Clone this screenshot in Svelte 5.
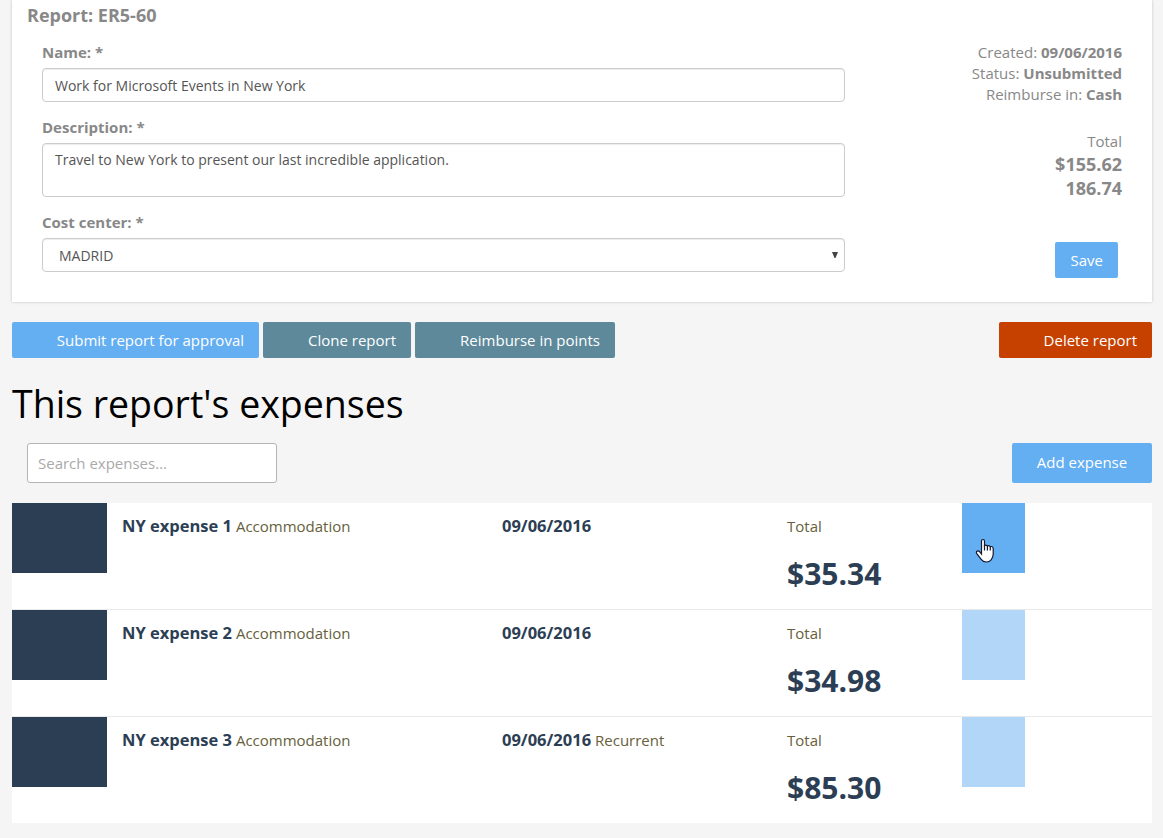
<script>
  const expenses = [
    { title: 'NY expense 1', category: 'Accommodation', date: '09/06/2016', note: '', total: '$35.34', active: true },
    { title: 'NY expense 2', category: 'Accommodation', date: '09/06/2016', note: '', total: '$34.98', active: false },
    { title: 'NY expense 3', category: 'Accommodation', date: '09/06/2016', note: 'Recurrent', total: '$85.30', active: false }
  ];
  let name = $state('Work for Microsoft Events in New York');
  let description = $state('Travel to New York to present our last incredible application.');
</script>

<main>
  <section class="card">
    <h2>Report: ER5-60</h2>
    <div class="card-body">
      <form class="fields">
        <label for="name">Name: *</label>
        <input id="name" class="control" bind:value={name} />
        <label for="description">Description: *</label>
        <textarea id="description" class="control" bind:value={description}></textarea>
        <label for="center">Cost center: *</label>
        <div id="center" class="control select">
          <span>MADRID</span>
          <svg width="6" height="6" viewBox="0 0 6 6"><path d="M0 0H6L3.5 6H2.5Z" fill="#444" /></svg>
        </div>
      </form>
      <aside>
        <div class="meta">Created: <b>09/06/2016</b></div>
        <div class="meta">Status: <b>Unsubmitted</b></div>
        <div class="meta">Reimburse in: <b>Cash</b></div>
        <div class="meta total-label">Total</div>
        <div class="sum">$155.62</div>
        <div class="sum">186.74</div>
        <button class="btn save">Save</button>
      </aside>
    </div>
  </section>

  <div class="actions">
    <button class="btn submit">Submit report for approval</button>
    <button class="btn teal clone">Clone report</button>
    <button class="btn teal points">Reimburse in points</button>
    <button class="btn delete">Delete report</button>
  </div>

  <h1>This report's expenses</h1>

  <div class="toolbar">
    <input class="search" placeholder="Search expenses..." />
    <button class="btn add">Add expense</button>
  </div>

  <div class="list">
    {#each expenses as e}
      <div class="row">
        <div class="thumb"></div>
        <div class="cell"><span class="title">{e.title}</span> <span class="light">{e.category}</span></div>
        <div class="cell"><span class="title">{e.date}</span> <span class="light">{e.note}</span></div>
        <div class="cell">
          <span class="light">Total</span>
          <div class="amount">{e.total}</div>
        </div>
        <div class="action" class:active={e.active}>
          {#if e.active}
            <svg class="pointer" width="20" height="26" viewBox="0 0 20 26">
              <path d="M6.5 15V3.2Q6.5 1.5 8 1.5T9.5 3.2V7.5Q10.5 6.5 12.3 7.8Q14 7 15.2 8.6Q18.2 8 18.2 11V16Q18.2 19.5 16 22Q14.5 24 11.2 24Q8 24 6.2 21.4L2 15.8Q0.6 13.7 2.3 13.1Q3.7 12.6 5 14.2L6.5 16Z" fill="#fff" stroke="#15182e" stroke-width="1.2" />
              <path d="M9.5 7V12.5M12.4 8V12.5M15.3 9V12.5" fill="none" stroke="#15182e" stroke-width="1.2" />
            </svg>
          {/if}
        </div>
      </div>
    {/each}
  </div>
</main>

<style>
  :global(body) { background: #f5f5f5; }
  main, button, input, textarea { font-family: 'Open Sans', sans-serif; }
  main { height: 838px; overflow: hidden; padding: 0 11px 0 12px; box-sizing: border-box; font-size: 15px; color: #888; }
  .card { height: 302px; background: #fff; box-shadow: 0 0 3px rgba(0, 0, 0, 0.2); box-sizing: border-box; padding: 3px 30px 0; }
  h2 { margin: 0 0 0 -15px; font-size: 18px; line-height: 25px; height: 39px; font-weight: 700; color: #888; }
  .card-body { display: flex; justify-content: space-between; }
  .fields { width: 803px; display: flex; flex-direction: column; }
  label { font-weight: 700; line-height: 21px; margin-bottom: 5px; }
  .control { height: 34px; box-sizing: border-box; width: 100%; border: 1px solid #ccc; border-radius: 4px; padding: 6px 12px; font-size: 14px; line-height: 20px; color: #555; background: #fff; box-shadow: inset 0 1px 1px rgba(0, 0, 0, 0.075); margin: 0 0 15px; outline: 0; }
  textarea.control { height: 54px; resize: none; overflow: hidden; display: block; }
  .select { display: flex; align-items: center; justify-content: space-between; padding: 6px 6px 6px 16px; margin: 0; }
  .select span { padding-top: 2px; }
  aside { text-align: right; }
  .meta { line-height: 21px; font-weight: 400; color: #888; }
  .meta b { font-weight: 700; color: #888; }
  .total-label { margin-top: 26px; }
  .sum { font-size: 18px; line-height: 24px; font-weight: 700; }
  .btn { border: 0; border-radius: 2px; height: 36px; padding: 0 15px; color: #fff; background: #64aef2; font-size: 15px; line-height: 36px; text-align: right; white-space: nowrap; }
  .save { width: 63px; margin: 42px 4px 0 0; }
  .actions { display: flex; gap: 4px; margin-top: 20px; }
  .submit { width: 247px; }
  .teal { background: #5d899b; }
  .clone { width: 148px; }
  .points { width: 200px; }
  .delete { width: 153px; margin-left: auto; background: #c64000; }
  h1 { margin: 20px 0 0; font-size: 37.5px; line-height: 51px; font-weight: 400; color: #000; height: 65px; }
  .toolbar { display: flex; justify-content: space-between; }
  .search { margin: 0 0 0 15px; width: 250px; height: 40px; box-sizing: border-box; border: 1px solid #b5b5b5; border-radius: 3px; padding: 0 10px; font-size: 15px; background: #fff; }
  .search::placeholder { color: #aaa; }
  .add { width: 140px; height: 40px; text-align: center; line-height: 38px; padding: 0 15px 2px; }
  .list { margin-top: 20px; }
  .row { display: grid; grid-template-columns: 95px 380px 285px 190px 63px; height: 107px; box-sizing: border-box; border-bottom: 1px solid #e9e9e9; background: #fff; }
  .row:last-child { border: 0; height: 106px; }
  .thumb, .action { height: 70px; background: #2c3e54; }
  .cell { padding: 12px 15px 0; line-height: 22px; white-space: nowrap; }
  .title { font-size: 16.5px; font-weight: 700; color: #2c3e54; }
  .light { font-weight: 400; color: #66603b; }
  .amount { font-size: 30px; line-height: 42px; font-weight: 700; color: #2c3e54; margin-top: 16px; }
  .action { background: #b1d6f8; position: relative; }
  .action.active { background: #64aef2; }
  .pointer { position: absolute; left: 13px; top: 35px; }
</style>
